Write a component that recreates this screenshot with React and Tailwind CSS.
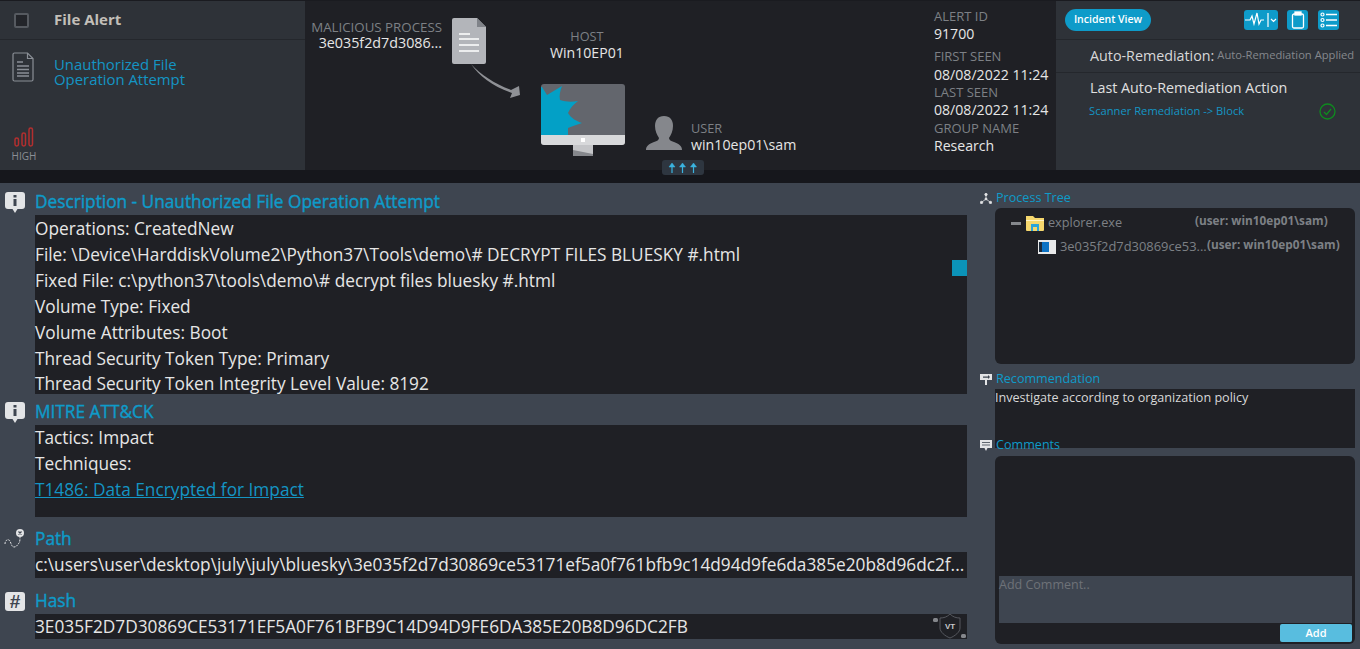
import React from "react";

const FileIcon = () => (
  <svg width="22" height="30" viewBox="0 0 22 30" fill="none" stroke="#8a8f96" strokeWidth="1.2">
    <path d="M2.5 1h13l5.500 5.500V27.500a1.500 1.500 0 0 1-1.500 1.500h-17A1.500 1.500 0 0 1 1 27.500V2.500A1.500 1.500 0 0 1 2.500 1z" />
    <path d="M15.500 1v5.500H21" />
    <path d="M5 10h6M5 14h12M5 17.500h12M5 21h12M5 24h12" strokeWidth="1.300" />
  </svg>
);

const Bars = () => (
  <svg width="20" height="20" viewBox="0 0 20 20" fill="none" stroke="#b32f2f" strokeWidth="1.500">
    <rect x="1" y="11" width="3.500" height="8" rx="1.700" />
    <rect x="8" y="6" width="3.500" height="13" rx="1.700" />
    <rect x="15" y="1" width="3.500" height="18" rx="1.700" />
  </svg>
);

const BigDoc = () => (
  <svg width="34" height="46" viewBox="0 0 34 46">
    <path d="M2 0h23l9 9v35a2 2 0 0 1-2 2H2a2 2 0 0 1-2-2V2a2 2 0 0 1 2-2z" fill="#b3b5ba" />
    <path d="M25 0l9 9h-9z" fill="#808389" />
    <path d="M7 16h11M7 21h20M7 27h20M7 33h20" stroke="#fff" strokeWidth="1.600" />
  </svg>
);

const Arrow = () => (
  <svg width="50" height="36" viewBox="0 0 50 36">
    <path d="M0 0C10 11 24 20 40 26L48 22L49 31L39 34L41 29C23 23 8 12 0 0z" fill="#8f9196" />
  </svg>
);

const Monitor = () => (
  <svg width="84" height="72" viewBox="0 0 84 72">
    <path d="M32 60h20v12H32z" fill="#c4c5c8" />
    <path d="M32 66l20 4v2H32z" fill="#85878c" />
    <rect x="0" y="0" width="84" height="61" rx="3" fill="#63666d" />
    <path d="M0 3l1 0 5 8L21 2c-2 5-3 10-2 14 6 2 12 2 18 1-4 3-8 7-10 12 3 5 8 8 14 10-5 2-10 3-14 5v7H0z" fill="#03a0c6" />
    <path d="M0 51h84v7a3 3 0 0 1-3 3H3a3 3 0 0 1-3-3z" fill="#d8d9db" />
    <rect x="40" y="54" width="4" height="4" fill="#fff" />
  </svg>
);

const Person = () => (
  <svg width="36" height="34" viewBox="0 0 36 34">
    <path d="M18 0c6 0 9 4 9 10 0 5-2 9-4 12 0 2 2 3 5 4 5 2 8 4 8 8H0c0-4 3-6 8-8 3-1 5-2 5-4-2-3-4-7-4-12C9 4 12 0 18 0z" fill="#85878c" />
  </svg>
);

const UpArrows = () => (
  <svg width="30" height="12" viewBox="0 0 30 12" fill="#3bb4e0" stroke="#3bb4e0" strokeWidth="1.200">
    <path d="M4 11V3M14.500 11V3M25.500 11V3" />
    <path d="M1 5l3-4 3 4zM11.500 5l3-4 3 4zM22.500 5l3-4 3 4z" strokeWidth="0.500" />
  </svg>
);

const Pulse = () => (
  <svg width="34" height="22" viewBox="0 0 34 22" fill="none" stroke="#fff" strokeWidth="1.200">
    <path d="M1 11h5l2-4 2 8 3-11 2 11 2-4h3M24 4v14M27 10l2.500 2.500L32 10" />
  </svg>
);

const Clipboard = () => (
  <svg width="14" height="18" viewBox="0 0 14 18" fill="none" stroke="#fff" strokeWidth="1.300">
    <rect x="1.500" y="3" width="11" height="14" rx="1.500" />
    <rect x="4" y="1" width="6" height="3" fill="#fff" />
  </svg>
);

const ListIcon = () => (
  <svg width="18" height="16" viewBox="0 0 18 16" fill="none" stroke="#fff" strokeWidth="1.200">
    <circle cx="2.500" cy="2.500" r="1.500" />
    <circle cx="2.500" cy="8" r="1.500" />
    <circle cx="2.500" cy="13.500" r="1.500" />
    <path d="M6 2.500h11M6 8h11M6 13.500h11" strokeWidth="1.600" />
  </svg>
);

const Check = () => (
  <svg width="17" height="17" viewBox="0 0 17 17" fill="none" stroke="#0f8a1f" strokeWidth="1.300">
    <circle cx="8.500" cy="8.500" r="7.500" />
    <path d="M5 9l2.500 2.500L12 6" />
  </svg>
);

const InfoIcon = () => (
  <svg width="20" height="21" viewBox="0 0 20 21">
    <path d="M3 0h14a3 3 0 0 1 3 3v11a3 3 0 0 1-3 3h-4.500L10 21l-2.500-4H3a3 3 0 0 1-3-3V3a3 3 0 0 1 3-3z" fill="#e3e4e6" />
    <rect x="8.500" y="3" width="3" height="2.500" fill="#3e4550" />
    <rect x="8.500" y="7" width="3" height="7" fill="#3e4550" />
  </svg>
);

const PathIcon = () => (
  <svg width="22" height="20" viewBox="0 0 22 20" fill="none" stroke="#e3e4e6" strokeWidth="1">
    <path d="M1 15c0-3 2-5 4-4s2 7 5 7 4-3 5-4 1-4 1-6" strokeDasharray="2 1" />
    <circle cx="16" cy="4" r="4" fill="#e3e4e6" stroke="none" />
    <path d="M14.500 2.500l3 3M17.500 2.500l-3 3" stroke="#3e4550" strokeWidth="1.200" />
  </svg>
);

const TreeIcon = () => (
  <svg width="12" height="11" viewBox="0 0 12 11" fill="#e3e4e6" stroke="#e3e4e6" strokeWidth="0.800">
    <path d="M6 2v4M6 6l-4 3M6 6l4 3" />
    <circle cx="6" cy="1.500" r="1.200" />
    <circle cx="1.500" cy="9.500" r="1.200" />
    <circle cx="10.500" cy="9.500" r="1.200" />
    <circle cx="6" cy="6" r="1" />
  </svg>
);

const SignIcon = () => (
  <svg width="12" height="12" viewBox="0 0 12 12" fill="#e3e4e6">
    <path d="M0 1h12v6H0z" />
    <path d="M5 7h2v5H5z" />
    <path d="M3 3.500h5V2l2 2-2 2V4.700H3z" fill="#3e4550" />
  </svg>
);

const CommentIcon = () => (
  <svg width="12" height="11" viewBox="0 0 12 11" fill="#e3e4e6">
    <path d="M0 0h12v8H7.500L6 11 4.500 8H0z" />
    <path d="M2 2.500h8M2 5h8" stroke="#3e4550" strokeWidth="0.800" />
  </svg>
);

const FolderIcon = () => (
  <svg width="18" height="16" viewBox="0 0 18 16">
    <path d="M0 1h7l2 2h9v12a1 1 0 0 1-1 1H1a1 1 0 0 1-1-1z" fill="#f5d76e" />
    <path d="M0 5h18v1H0z" fill="#fff3c4" />
    <path d="M5 9h8v7h-2v-4H7v4H5z" fill="#2aa5dc" />
  </svg>
);

const ExeIcon = () => (
  <svg width="18" height="14" viewBox="0 0 18 14">
    <rect width="18" height="14" fill="#e8e9ea" />
    <rect x="4" y="2" width="7" height="10" fill="#0c72c4" />
    <rect x="1" y="2" width="3" height="10" fill="#1c2a3a" />
  </svg>
);

const VtIcon = () => (
  <svg width="35" height="25" viewBox="0 0 35 25" fill="none">
    <path d="M8 4c4 0 7-1 10-4 3 3 6 4 10 4v10c0 4-5 8-10 10-5-2-10-6-10-10z" stroke="#5b5e64" strokeWidth="0.900" />
    <text x="18" y="15" textAnchor="middle" fontSize="8" fontWeight="700" fill="#c8c9cc" fontFamily="Liberation Sans, sans-serif">VT</text>
    <rect x="1" y="4" width="5" height="4" rx="1.500" fill="#85878c" />
    <rect x="29" y="20" width="5" height="4" rx="1.500" fill="#85878c" />
  </svg>
);

const Section = ({ icon, title, className, children }) => (
  <div className={className}>
    <div className="flex h-[26px] items-center">
      <div className="flex w-[35px] justify-center pr-[5px]">{icon}</div>
      <h3 className="text-[17.250px] leading-[26px] font-normal text-[#0e9bc9] [-webkit-text-stroke:0.4px_#0e9bc9]">{title}</h3>
    </div>
    <div className="ml-[35px] bg-[#1f2025] text-[17.250px] leading-[25.900px] text-[#e6e6e6]">{children}</div>
  </div>
);

const SideTitle = ({ icon, title, className }) => (
  <div className={"flex h-[20px] items-center " + className}>
    <div className="flex w-[26px] justify-end pr-[4px]">{icon}</div>
    <span className="relative text-[12.600px] text-[#0e9bc9]">{title}</span>
  </div>
);

export default function App() {
  return (
    <div className="h-[649px] w-[1360px] overflow-hidden bg-[#3e4550] font-['Open_Sans','Noto_Sans',sans-serif]">
      {/* top summary */}
      <div className="flex h-[170px] border-t border-[#1a1b20]">
        <div className="flex w-[305px] flex-col bg-[#2e3238]">
          <div className="flex h-[39px] items-center border-b border-[#24272c]">
            <div className="ml-[14px] h-[15px] w-[15px] rounded-[2px] border-2 border-[#565a60] bg-[#23252a]" />
            <span className="ml-[25px] pb-[2px] text-[15px] font-bold text-[#c2bfb8]">File Alert</span>
          </div>
          <div className="flex flex-1">
            <div className="flex w-[54px] flex-col items-center">
              <div className="mt-[12px] mr-[8px]">
                <FileIcon />
              </div>
              <div className="mt-[45px] mr-[6px]">
                <Bars />
              </div>
              <span className="mt-[2px] mr-[6px] text-[10px] leading-[14px] text-[#8a8f96]">HIGH</span>
            </div>
            <div className="mt-[17px] text-[14.900px] leading-[15px] text-[#1495c4]">
              Unauthorized File
              <br />
              Operation Attempt
            </div>
          </div>
        </div>

        <div className="relative flex-1 bg-[#1f2025]">
          <div className="absolute top-[18px] left-[5px] w-[132px] text-right">
            <div className="text-[13.300px] leading-[16px] text-[#7d8085]">MALICIOUS PROCESS</div>
            <div className="text-[14.300px] leading-[15px] text-[#e6e6e6]">3e035f2d7d3086...</div>
          </div>
          <div className="absolute top-[17px] left-[147px]">
            <BigDoc />
          </div>
          <div className="absolute top-[63px] left-[166px]">
            <Arrow />
          </div>
          <div className="absolute top-[28px] left-[245px] text-center">
            <div className="text-[12.700px] leading-[15px] text-[#7d8085]">HOST</div>
            <div className="text-[14.100px] leading-[17px] text-[#e6e6e6]">Win10EP01</div>
          </div>
          <div className="absolute top-[83px] left-[236px]">
            <Monitor />
          </div>
          <div className="absolute top-[115px] left-[341px]">
            <Person />
          </div>
          <div className="absolute top-[120px] left-[386px]">
            <div className="text-[12.700px] leading-[15px] text-[#7d8085]">USER</div>
            <div className="text-[14.200px] leading-[17px] text-[#e6e6e6]">win10ep01\sam</div>
          </div>
          <div className="absolute top-[159px] left-[357px] z-10 flex h-[15px] w-[42px] items-center justify-center rounded-[3px] bg-[#2e3640]">
            <UpArrows />
          </div>
          <div className="absolute top-0 right-0 w-[122px] pt-[7px] text-[14.100px] text-[#e6e6e6]">
            <div className="text-[13px] leading-[16px] text-[#7d8085]">ALERT ID</div>
            <div className="leading-[20px]">91700</div>
            <div className="mt-[3px] text-[13px] leading-[18px] text-[#7d8085]">FIRST SEEN</div>
            <div className="leading-[20px]">08/08/2022 11:24</div>
            <div className="-mt-[1px] text-[13px] leading-[16px] text-[#7d8085]">LAST SEEN</div>
            <div className="leading-[20px]">08/08/2022 11:24</div>
            <div className="text-[13px] leading-[16px] text-[#7d8085]">GROUP NAME</div>
            <div className="leading-[20px]">Research</div>
          </div>
        </div>

        <div className="flex w-[304px] flex-col bg-[#2e3238]">
          <div className="flex h-[39px] items-center border-b border-[#24272c] pl-[9px]">
            <button className="h-[22px] w-[86px] rounded-full bg-[#0e9bc9] text-[10.500px] font-semibold text-white">
              Incident View
            </button>
            <div className="ml-[93px] flex h-[20px] w-[34px] items-center justify-center rounded-[3px] bg-[#0e9bc9]">
              <Pulse />
            </div>
            <div className="ml-[9px] flex h-[20px] w-[21px] items-center justify-center rounded-[3px] bg-[#0e9bc9]">
              <Clipboard />
            </div>
            <div className="ml-[10px] flex h-[20px] w-[21px] items-center justify-center rounded-[3px] bg-[#0e9bc9]">
              <ListIcon />
            </div>
          </div>
          <div className="flex h-[33px] items-center border-b border-[#24272c] pb-[1px] pl-[34px] text-[14.300px] text-[#d8d8d8]">
            Auto-Remediation:
            <span className="ml-[3px] text-[11.200px] text-[#85888d]">Auto-Remediation Applied</span>
          </div>
          <div className="pt-[5px] pl-[34px]">
            <div className="text-[14.300px] leading-[20px] text-[#e0e0e0]">Last Auto-Remediation Action</div>
            <div className="mt-[3px] -ml-[1px] flex h-[20px] items-center">
              <span className="w-[230px] text-[11.200px] text-[#1495c4]">Scanner Remediation -&gt; Block</span>
              <Check />
            </div>
          </div>
        </div>
      </div>
      <div className="h-[13px] bg-[#16171c]" />

      {/* details */}
      <div className="flex">
        <div className="relative w-[967px] pt-[6px]">
          <Section icon={<InfoIcon />} title="Description - Unauthorized File Operation Attempt">
            <div className="h-[179px] pt-[1px]">
              <div>Operations: CreatedNew</div>
              <div>File: \Device\HarddiskVolume2\Python37\Tools\demo\# DECRYPT FILES BLUESKY #.html</div>
              <div>Fixed File: c:\python37\tools\demo\# decrypt files bluesky #.html</div>
              <div>Volume Type: Fixed</div>
              <div>Volume Attributes: Boot</div>
              <div>Thread Security Token Type: Primary</div>
              <div>Thread Security Token Integrity Level Value: 8192</div>
            </div>
          </Section>
          <div className="absolute top-[77px] right-0 h-[16px] w-[15px] bg-[#0b93b8]" />
          <Section icon={<InfoIcon />} title="MITRE ATT&CK" className="mt-[5px]">
            <div className="h-[92px]">
              <div>Tactics: Impact</div>
              <div>Techniques:</div>
              <a className="text-[#1495c4] underline">T1486: Data Encrypted for Impact</a>
            </div>
          </Section>
          <Section icon={<PathIcon />} title="Path" className="mt-[9px]">
            <div className="h-[26px] truncate">
              c:\users\user\desktop\july\july\bluesky\3e035f2d7d30869ce53171ef5a0f761bfb9c14d94d9fe6da385e20b8d96dc2f...
            </div>
          </Section>
          <Section
            icon={
              <div className="flex h-[19px] w-[20px] items-center justify-center rounded-[3px] bg-[#e3e4e6] font-['Liberation_Sans',sans-serif] text-[19px] leading-none font-bold text-[#3e4550]">
                #
              </div>
            }
            title="Hash"
            className="mt-[10px]"
          >
            <div className="relative h-[25px]">
              3E035F2D7D30869CE53171EF5A0F761BFB9C14D94D9FE6DA385E20B8D96DC2FB
              <div className="absolute top-0 right-0">
                <VtIcon />
              </div>
            </div>
          </Section>
        </div>

        <div className="ml-[3px] w-[390px] text-[12px]">
          <SideTitle icon={<TreeIcon />} title="Process Tree" className="mt-[5px]" />
          <div className="ml-[25px] h-[156px] w-[360px] rounded-[6px] bg-[#1f2025] pt-[5px] text-[#7d8085]">
            <div className="flex h-[20px] items-center pl-[16px]">
              <div className="h-[3px] w-[10px] bg-[#85888d]" />
              <div className="ml-[5px]">
                <FolderIcon />
              </div>
              <span className="ml-[4px] w-[147px] text-[12.700px]">explorer.exe</span>
              <span className="-mt-[4px] text-[11.800px] font-bold">(user: win10ep01\sam)</span>
            </div>
            <div className="mt-[4px] flex h-[20px] items-center pl-[43px]">
              <ExeIcon />
              <span className="ml-[4px] w-[147px] text-[12.900px]">3e035f2d7d30869ce53...</span>
              <span className="-mt-[4px] text-[11.800px] font-bold">(user: win10ep01\sam)</span>
            </div>
          </div>
          <SideTitle icon={<SignIcon />} title="Recommendation" className="mt-[5px]" />
          <div className="ml-[25px] h-[59px] w-[360px] bg-[#1f2025] text-[12.600px] leading-[17px] text-[#d8d8d8]">
            Investigate according to organization policy
          </div>
          <SideTitle icon={<CommentIcon />} title="Comments" className="relative -mt-[13px]" />
          <div className="mt-[1px] ml-[25px] flex h-[188px] w-[360px] flex-col rounded-[6px] bg-[#1f2025] pr-[3px] pb-[2px] pl-[4px]">
            <div className="mt-auto h-[47px] bg-[#3e4550] text-[12.500px] leading-[17px] text-[#6e7278]">Add Comment..</div>
            <button className="mt-[1px] ml-auto h-[18px] w-[72px] rounded-[2px] bg-[#58bddf] text-[11px] font-semibold text-white">
              Add
            </button>
          </div>
        </div>
      </div>
    </div>
  );
}
